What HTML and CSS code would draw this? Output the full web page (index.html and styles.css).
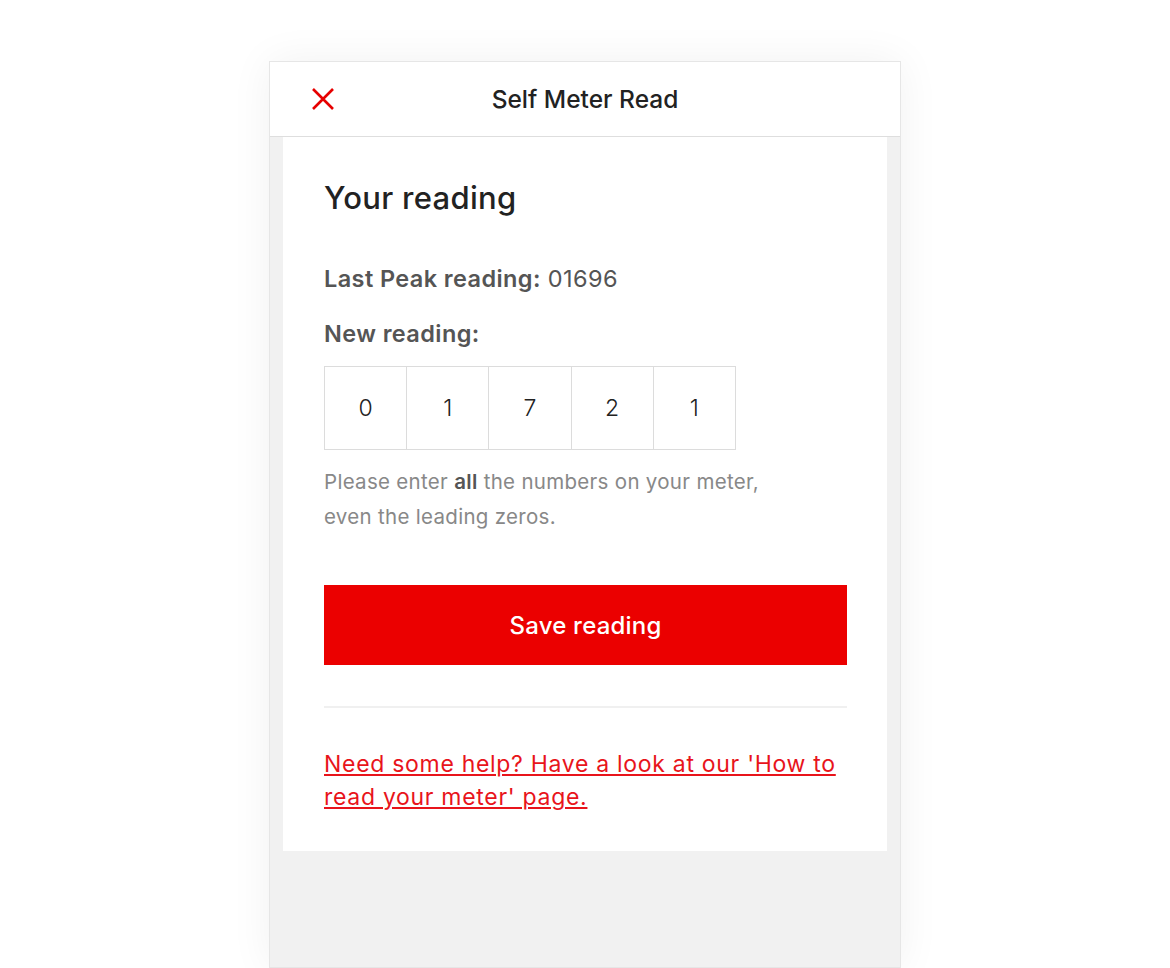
FILE: index.html
```html
<!DOCTYPE html>
<html lang="en">
<head>
<meta charset="utf-8">
<title>Self Meter Read</title>
<link rel="stylesheet" href="styles.css">
</head>
<body>
<div class="stage">
  <div class="frame">
    <header class="header">
      <button class="close" aria-label="Close">
        <svg width="24" height="24" viewBox="0 0 24 24"><path d="M2 2 L22 22 M22 2 L2 22" stroke="#e60000" stroke-width="2.6" stroke-linecap="butt" fill="none"/></svg>
      </button>
      <h1 class="title">Self Meter Read</h1>
    </header>
    <main class="card">
      <h2 class="heading">Your reading</h2>
      <p class="last"><strong>Last Peak reading:</strong> 01696</p>
      <p class="label">New reading:</p>
      <div class="digits">
        <div class="digit">0</div>
        <div class="digit">1</div>
        <div class="digit">7</div>
        <div class="digit">2</div>
        <div class="digit">1</div>
      </div>
      <p class="hint">Please enter <strong>all</strong> the numbers on your meter,<br>even the leading zeros.</p>
      <button class="save">Save reading</button>
      <hr class="divider">
      <a class="help" href="#">Need some help? Have a look at our 'How to read your meter' page.</a>
    </main>
  </div>
</div>
</body>
</html>
```
FILE: styles.css
```css
html, body {
  margin: 0;
  padding: 0;
  background: #ffffff;
  font-family: "Inter", "Lato", "Liberation Sans", sans-serif;
}
.stage {
  display: flex;
  justify-content: center;
  padding-top: 61px;
  height: 907px;
  overflow: hidden;
}
.frame {
  width: 630px;
  background: #f1f1f1;
  border: 1px solid #e6e6e6;
  box-shadow: 0 0 40px rgba(0, 0, 0, 0.06);
  display: flex;
  flex-direction: column;
}
.header {
  position: relative;
  height: 74px;
  background: #ffffff;
  border-bottom: 1px solid #dedede;
  display: flex;
  align-items: center;
  justify-content: center;
}
.close {
  position: absolute;
  left: 41px;
  top: 25px;
  width: 24px;
  height: 24px;
  padding: 0;
  border: 0;
  background: none;
  display: flex;
}
.title {
  margin: 0;
  font-size: 24.5px;
  font-weight: 500;
  color: #222222;
}
.card {
  margin: 0 13px 0 13px;
  background: #ffffff;
  padding: 41px 40px 38px 41px;
  display: flex;
  flex-direction: column;
  align-items: flex-start;
}
.heading {
  margin: 0;
  font-size: 31px;
  line-height: 40px;
  font-weight: 500;
  letter-spacing: 0.3px;
  color: #222222;
}
.last {
  margin: 46px 0 0;
  font-size: 23.5px;
  line-height: 30px;
  letter-spacing: 0.4px;
  color: #555555;
}
.last strong, .label {
  font-weight: 600;
  color: #555555;
}
.label {
  margin: 25px 0 0;
  font-size: 23.5px;
  line-height: 30px;
  letter-spacing: 0.4px;
}
.digits {
  margin-top: 17px;
  display: flex;
  border: 1px solid #dcdcdc;
}
.digit {
  width: 81.2px;
  height: 82px;
  display: flex;
  align-items: center;
  justify-content: center;
  font-size: 23px;
  font-weight: 300;
  color: #222222;
  border-left: 1px solid #dcdcdc;
}
.digit:first-child {
  border-left: 0;
}
.hint {
  margin: 14px 0 0;
  font-size: 20.5px;
  line-height: 35px;
  letter-spacing: 0.3px;
  color: #888888;
}
.hint strong {
  font-weight: 600;
  color: #555555;
}
.save {
  margin-top: 51px;
  width: 100%;
  height: 80px;
  border: 0;
  background: #eb0000;
  color: #ffffff;
  font-family: inherit;
  font-size: 24px;
  font-weight: 500;
  letter-spacing: 0.2px;
}
.divider {
  width: 100%;
  margin: 41px 0 0;
  border: 0;
  border-top: 2px solid #f0f0f0;
}
.help {
  margin-top: 40px;
  font-size: 23px;
  line-height: 32.5px;
  letter-spacing: 0.7px;
  color: #e8141b;
  text-decoration: underline;
  text-underline-offset: 2px;
  text-decoration-thickness: 1.5px;
}
```
